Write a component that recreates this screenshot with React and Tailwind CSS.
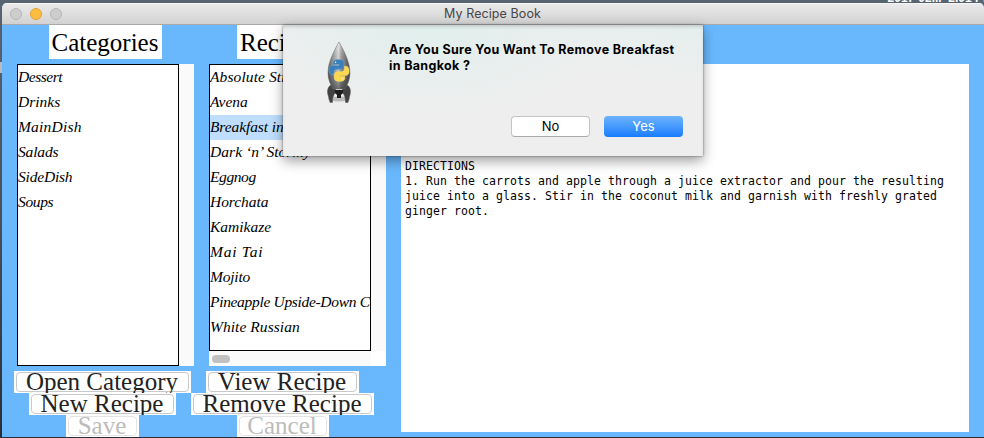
const categories = [
  { name: "Dessert", fit: "tracking-[-0.45px]" },
  { name: "Drinks", fit: "tracking-[0px]" },
  { name: "MainDish", fit: "tracking-[0.2px]" },
  { name: "Salads", fit: "tracking-[-0.15px]" },
  { name: "SideDish", fit: "tracking-[-0.2px]" },
  { name: "Soups", fit: "tracking-[-0.35px]" },
];

const recipes = [
  { name: "Absolute Stress", fit: "tracking-[0.1px]" },
  { name: "Avena", fit: "tracking-[0px]" },
  { name: "Breakfast in Bangkok", fit: "tracking-[-0.1px]", selected: true },
  { name: "Dark ‘n’ Stormy", fit: "tracking-[0.05px]" },
  { name: "Eggnog", fit: "tracking-[-0.4px]" },
  { name: "Horchata", fit: "tracking-[-0.05px]" },
  { name: "Kamikaze", fit: "tracking-[0px]" },
  { name: "Mai Tai", fit: "tracking-[0.75px]" },
  { name: "Mojito", fit: "tracking-[-0.2px]" },
  { name: "Pineapple Upside-Down C", fit: "tracking-[-0.32px]" },
  { name: "White Russian", fit: "tracking-[0.05px]" },
];

function ListBox({ items, className }) {
  return (
    <ul className={`w-[162px] shrink-0 overflow-hidden border border-black bg-white font-['Apple_Chancery','Liberation_Serif',serif] text-[15.5px] italic text-black ${className}`}>
      {items.map((item) => (
        <li key={item.name} className={`h-[25px] whitespace-nowrap leading-[24px] ${item.fit} ${item.selected ? "bg-[#bfdefe]" : ""}`}>
          {item.name}
        </li>
      ))}
    </ul>
  );
}

function TkButton({ children, className, disabled }) {
  return (
    <button disabled={disabled} className={`block h-[22px] shrink-0 overflow-hidden bg-white px-[2px] pb-px pt-px leading-[22px] ${className}`}>
      <span className={`flex h-[20px] items-center justify-center whitespace-nowrap rounded-[4px] border pr-px ${disabled ? "border-[#e4e4e4] text-[#bcbcbc]" : "border-[#c9c9c9] text-[#222]"}`}>
        {children}
      </span>
    </button>
  );
}

function Rocket() {
  return (
    <svg viewBox="0 0 30 66" className="h-[66px] w-[30px]">
      <defs>
        <linearGradient id="hull" x1="0" x2="1" y1="0" y2="0">
          <stop offset="0" stopColor="#5c5c5c" />
          <stop offset=".3" stopColor="#b0b0b0" />
          <stop offset=".48" stopColor="#e2e2e2" />
          <stop offset=".62" stopColor="#999" />
          <stop offset="1" stopColor="#4c4c4c" />
        </linearGradient>
        <linearGradient id="shade" x1="0" x2="0" y1="0" y2="1">
          <stop offset="0" stopColor="#fff" stopOpacity=".35" />
          <stop offset=".5" stopColor="#444" stopOpacity=".1" />
          <stop offset="1" stopColor="#222" stopOpacity=".6" />
        </linearGradient>
      </defs>
      <ellipse cx="15" cy="60" rx="11" ry="2.5" fill="#777" opacity=".45" />
      <path d="M7 46C3.500 48 3 52 4 56l2 7.500h2.500c0-5 1-9 5-11zM23 46c3.500 2 4 6 3 10l-2 7.500h-2.500c0-5-1-9-5-11z" fill="#414141" stroke="#5a5a5a" strokeWidth=".5" />
      <path d="M15 3C10 12 4 23 4 34c0 7 3 12 5 16h12c2-4 5-9 5-16C26 23 20 12 15 3z" fill="url(#hull)" />
      <path d="M15 3C10 12 4 23 4 34c0 7 3 12 5 16h12c2-4 5-9 5-16C26 23 20 12 15 3z" fill="url(#shade)" stroke="#666" strokeWidth=".5" />
      <path d="M11 51h8v3l-2 2v3h-4v-3l-2-2z" fill="#1e1e1e" />
      <g transform="translate(4.900 20.500) scale(.84)">
        <path d="M11 0C7 0 5 1.500 5 3.500V6h7v1H4C1 7 0 9 0 12.500S1.500 18 4 18h2v-3c0-2 1.500-3.500 4-3.500h4c2 0 4-1.500 4-3V3.500C18 1 15 0 11 0z" fill="#3b80ba" stroke="#6fa3cd" strokeWidth=".6" />
        <path d="M13 26c4 0 6-1.500 6-3.500V20h-7v-1h8c3 0 4-2 4-5.500S22.500 8 20 8h-1.500v3c0 2-1.500 3.500-4 3.500h-4c-2 0-4 1.500-4 3v5c0 2.500 3 3.500 6.500 3.500z" fill="#fcd84c" stroke="#fbe47c" strokeWidth=".6" />
        <circle cx="8" cy="3.300" r=".8" fill="#fff" />
        <circle cx="16" cy="22.700" r=".8" fill="#fff" />
      </g>
    </svg>
  );
}

function ConfirmSheet() {
  return (
    <div role="dialog" className="absolute left-[281px] top-[22px] flex h-[131px] w-[420px] bg-[#eee] bg-[radial-gradient(ellipse_at_35%_0%,#e0efed_0%,transparent_48%),radial-gradient(ellipse_at_100%_0%,#e4efee_0%,transparent_30%)] font-[Inter,sans-serif] text-[13px] text-black shadow-[0_5px_12px_rgba(0,0,0,0.38),0_0_2px_rgba(0,0,0,0.5),inset_0_3px_4px_-2px_rgba(0,0,0,0.2)]">
      <div className="w-[106px] shrink-0 pl-[41px] pt-[14px]">
        <Rocket />
      </div>
      <div className="flex flex-1 flex-col justify-between pb-[19px] pr-[20px] pt-[17px]">
        <p className="whitespace-nowrap text-[12.500px] font-bold leading-4 tracking-[0.34px]">
          Are You Sure You Want To Remove Breakfast
          <br />
          in Bangkok ?
        </p>
        <div className="flex justify-end gap-[14px]">
          <button className="h-[21px] w-[79px] rounded-[4px] border border-[#c4c4c4] border-b-[#aaa] bg-white leading-[19px]">No</button>
          <button className="h-[21px] w-[79px] rounded-[4px] bg-linear-to-b from-[#6cb3fa] to-[#147cfe] leading-[21px] text-white">Yes</button>
        </div>
      </div>
    </div>
  );
}

export default function App() {
  return (
    <div className="relative h-[438px] w-[984px] overflow-hidden bg-[linear-gradient(#596471,#49505a_50%,#292e3a)] pl-[2px] pt-[3px]">
      <div className="absolute right-[-9px] top-[-10px] whitespace-pre font-['Liberation_Sans',sans-serif] text-[12px] font-bold leading-4 text-white">2017-02...  2.01 PM</div>
      <div className="absolute left-0 top-[62px] h-[11px] w-[2px] bg-[#bbb]" />
      <div className="relative h-[434px] w-[982px] overflow-hidden rounded-t-[5px] bg-[#69b8fd]">
        <header className="flex h-[22px] items-center border-b border-[#aaa] bg-linear-to-b from-[#ebebeb] to-[#d2d2d2] pl-[8px] shadow-[inset_0_1px_0_#f5f5f5]">
          <div className="flex gap-2">
            <span className="size-3 rounded-full border border-[#b6b6b6] bg-[#cecece]" />
            <span className="size-3 rounded-full border border-[#dfa034] bg-[#ffbd3f]" />
            <span className="size-3 rounded-full border border-[#b6b6b6] bg-[#cecece]" />
          </div>
          <h1 className="flex-1 pr-[61px] pt-px text-center font-[Inter,sans-serif] text-[12.500px] leading-[20px] tracking-[0.08px] text-[#474747]">My Recipe Book</h1>
        </header>

        <main className="flex h-[412px] font-['Liberation_Serif',serif] text-[25px]">
          <div className="w-[399px] shrink-0">
            <div className="flex h-[39px] items-start pl-[47px]">
              <h2 className="h-[34px] w-[113px] bg-white pr-px text-center leading-[36px]">Categories</h2>
              <h2 className="ml-[75px] h-[34px] w-[120px] bg-white pl-[3px] leading-[36px]">Recipes</h2>
            </div>
            <div className="flex h-[302px] gap-[15px] pl-[15px]">
              <div className="flex w-[177px] bg-[#fafafa]">
                <ListBox items={categories} className="h-[302px]" />
              </div>
              <div className="w-[177px] bg-[#fafafa]">
                <ListBox items={recipes} className="h-[287px]" />
                <div className="flex h-[15px] items-center justify-between pl-[3px]">
                  <div className="h-[8px] w-[18px] rounded-full bg-[#c1c1c1]" />
                  <div className="size-[15px] bg-white" />
                </div>
              </div>
            </div>
            <div className="flex pl-[12px] pt-[5px]">
              <div className="flex w-[177px] flex-col items-center">
                <TkButton className="w-[177px]">Open Category</TkButton>
                <TkButton className="w-[147px]">New Recipe</TkButton>
                <TkButton className="w-[73px]" disabled>Save</TkButton>
              </div>
              <div className="flex w-[183px] flex-col items-center">
                <TkButton className="w-[153px]">View Recipe</TkButton>
                <TkButton className="w-[183px]">Remove Recipe</TkButton>
                <TkButton className="w-[92px]" disabled>Cancel</TkButton>
              </div>
            </div>
          </div>

          <div className="mt-[39px] h-[368px] w-[568px] whitespace-pre bg-white pl-[4px] pt-[95px] font-['DejaVu_Sans_Mono',monospace] text-[11.500px] leading-[15px] tracking-[0.077px] text-black">
            {"DIRECTIONS\n1. Run the carrots and apple through a juice extractor and pour the resulting\njuice into a glass. Stir in the coconut milk and garnish with freshly grated\nginger root."}
          </div>
        </main>
        <ConfirmSheet />
      </div>
    </div>
  );
}
